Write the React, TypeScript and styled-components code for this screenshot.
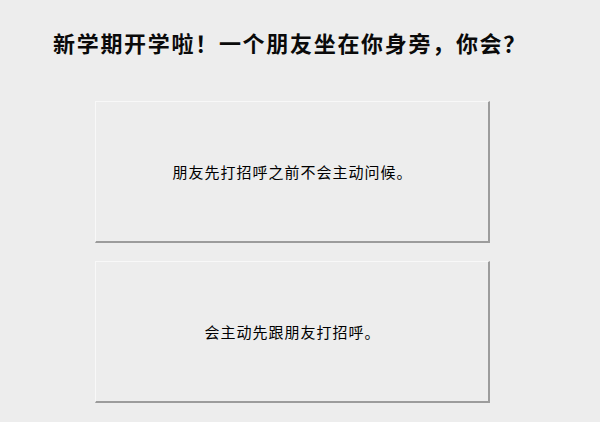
import React from 'react';
import styled, { createGlobalStyle } from 'styled-components';

const GlobalStyle = createGlobalStyle`
  html, body {
    margin: 0;
    padding: 0;
    background: #ededed;
  }
  body {
    font-family: "Liberation Sans", "Noto Sans CJK SC", sans-serif;
    color: #111;
  }
`;

const Page = styled.div`
  width: 600px;
  height: 422px;
  overflow: hidden;
  box-sizing: border-box;
  padding: 30px 0 0 53px;
`;

const Question = styled.h1`
  margin: 0;
  font-size: 22px;
  line-height: 30px;
  font-weight: bold;
  letter-spacing: 1.7px;
  white-space: nowrap;
  color: #0a0a0a;
`;

const Options = styled.div`
  display: flex;
  flex-direction: column;
  gap: 18px;
  margin: 41px 0 0 42px;
`;

const OptionCard = styled.button`
  box-sizing: border-box;
  width: 395px;
  height: 142px;
  display: flex;
  align-items: center;
  justify-content: center;
  padding: 0 0 0 1px;
  background: #ededed;
  border-top: 1px solid #f8f8f8;
  border-left: 1px solid #f8f8f8;
  border-right: 2px solid #9c9c9c;
  border-bottom: 2px solid #9c9c9c;
  font-family: "Liberation Sans", "Noto Sans CJK SC", sans-serif;
  font-size: 15px;
  letter-spacing: 1px;
  color: #000;
  cursor: pointer;
`;

const options = ['朋友先打招呼之前不会主动问候。', '会主动先跟朋友打招呼。'];

export default function App() {
  return (
    <>
      <GlobalStyle />
      <Page>
        <Question>新学期开学啦！一个朋友坐在你身旁，你会？</Question>
        <Options>
          {options.map(text => (
            <OptionCard key={text}>{text}</OptionCard>
          ))}
        </Options>
      </Page>
    </>
  );
}
